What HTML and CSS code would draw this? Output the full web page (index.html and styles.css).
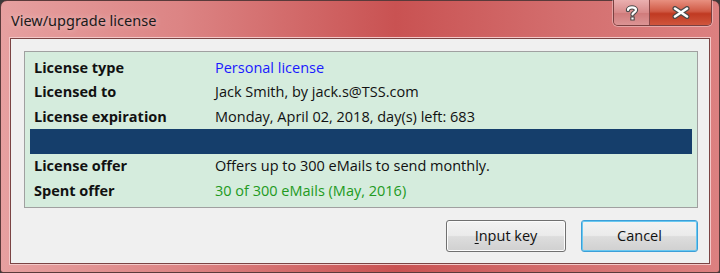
FILE: index.html
```html
<!DOCTYPE html>
<html lang="en">

<head>
    <meta charset="UTF-8">
    <title>View/upgrade license</title>
    <link rel="stylesheet" href="styles.css">
</head>

<body>
    <div class="window">
        <div class="titlebar">
            <span class="title">View/upgrade license</span>
            <div class="caption-buttons">
                <div class="cap help">
                    <svg width="14" height="16" viewBox="0 0 14 16">
                        <path d="M3 5 C3 1.5 11 1.5 11 5 C11 7.5 7.5 7.5 7.5 9.5" fill="none" stroke="#4a4a4a" stroke-width="4.4" stroke-linecap="round"/>
                        <rect x="5.3" y="11.5" width="4.4" height="4" fill="#4a4a4a"/>
                        <path d="M3 5 C3 1.5 11 1.5 11 5 C11 7.5 7.5 7.5 7.5 9.5" fill="none" stroke="#fff" stroke-width="2.2" stroke-linecap="round"/>
                        <rect x="6.4" y="12.5" width="2.2" height="2" fill="#fff"/>
                    </svg>
                </div>
                <div class="cap close">
                    <svg width="18" height="13" viewBox="0 0 18 13">
                        <path d="M3 2.5 L15 10.5 M15 2.5 L3 10.5" stroke="#4a4a4a" stroke-width="5" stroke-linecap="round"/>
                        <path d="M3 2.5 L15 10.5 M15 2.5 L3 10.5" stroke="#fff" stroke-width="2.6" stroke-linecap="round"/>
                    </svg>
                </div>
            </div>
        </div>

        <div class="client">
            <div class="info-panel">
                <div class="row">
                    <span class="label">License type</span>
                    <span class="value blue">Personal license</span>
                </div>
                <div class="row">
                    <span class="label">Licensed to</span>
                    <span class="value">Jack Smith, by jack.s@TSS.com</span>
                </div>
                <div class="row">
                    <span class="label">License expiration</span>
                    <span class="value">Monday, April 02, 2018, day(s) left: 683</span>
                </div>
                <div class="separator"></div>
                <div class="row">
                    <span class="label">License offer</span>
                    <span class="value">Offers up to 300 eMails to send monthly.</span>
                </div>
                <div class="row">
                    <span class="label">Spent offer</span>
                    <span class="value green">30 of 300 eMails (May, 2016)</span>
                </div>
            </div>

            <div class="buttons">
                <button class="btn"><u>I</u>nput key</button>
                <button class="btn default">Cancel</button>
            </div>
        </div>
    </div>
</body>

</html>
```

FILE: styles.css
```css
* {
    box-sizing: border-box;
}

body {
    margin: 0;
    background: #3a3a3a;
    font-family: "Open Sans", "Noto Sans", sans-serif;
}

.window {
    width: 720px;
    height: 273px;
    display: flex;
    flex-direction: column;
    padding: 0 9px 8px 9px;
    border: 1px solid #5a3a3a;
    border-radius: 7px 7px 3px 3px;
    background: linear-gradient(90deg, #e6a0a0 0%, #dc8484 25%, #c95252 55%, #d47070 80%, #dc8080 100%);
}

.titlebar {
    height: 37px;
    display: flex;
    justify-content: space-between;
    align-items: flex-start;
}

.title {
    margin-top: 9px;
    margin-left: 1px;
    font-family: "Noto Sans", sans-serif;
    font-size: 14.5px;
    color: #1a1a1a;
    text-shadow: 0 0 6px rgba(255, 255, 255, 0.5);
}

.caption-buttons {
    display: flex;
    margin-top: -1px;
    margin-right: -2px;
    border: 1px solid #7a4040;
    border-top: none;
    border-radius: 0 0 5px 5px;
    overflow: hidden;
    box-shadow: 0 0 0 1px rgba(255, 255, 255, 0.35);
}

.cap {
    height: 25px;
    display: flex;
    align-items: center;
    justify-content: center;
}

.help {
    width: 36px;
    border-right: 1px solid #8a4848;
    background: linear-gradient(#eab0b0, #d88a8a 50%, #cf7a7a 51%, #dc9494);
}

.close {
    width: 61px;
    background: linear-gradient(#e89080, #d05a45 45%, #c03a22 55%, #d0553c);
}

.client {
    flex: 1;
    display: flex;
    flex-direction: column;
    background: #f0f0f0;
    border: 1px solid #7b4444;
    box-shadow: 0 0 0 1px #f3c8c8;
    padding: 12px 11px 11px 13px;
}

.info-panel {
    background: #d5ecdd;
    border: 1px solid #a0a0a0;
    padding: 3px 5px 4px 5px;
}

.row {
    height: 24.5px;
    display: flex;
    align-items: center;
    font-size: 14.5px;
    color: #111;
}

.label {
    width: 181px;
    margin-left: 4px;
    font-weight: bold;
}

.value.blue {
    color: #1a1aff;
}

.value.green {
    color: #229a22;
}

.separator {
    height: 25px;
    background: #153e6b;
}

.buttons {
    display: flex;
    justify-content: flex-end;
    gap: 15px;
    margin-top: 12px;
}

.btn {
    width: 120px;
    height: 32px;
    font-family: "Open Sans", "Noto Sans", sans-serif;
    font-size: 14.5px;
    color: #111;
    border: 1px solid #707070;
    border-radius: 3px;
    background: linear-gradient(#f3f3f3 0%, #ebebeb 48%, #dddddd 52%, #d0d0d0 100%);
    box-shadow: inset 0 0 0 1px #fcfcfc;
}

.btn.default {
    width: 117px;
    border-color: #3c9fd8;
    box-shadow: inset 0 0 0 1px #6ac8f0;
}

.btn u {
    text-decoration-thickness: 1px;
    text-underline-offset: 2px;
}
```
